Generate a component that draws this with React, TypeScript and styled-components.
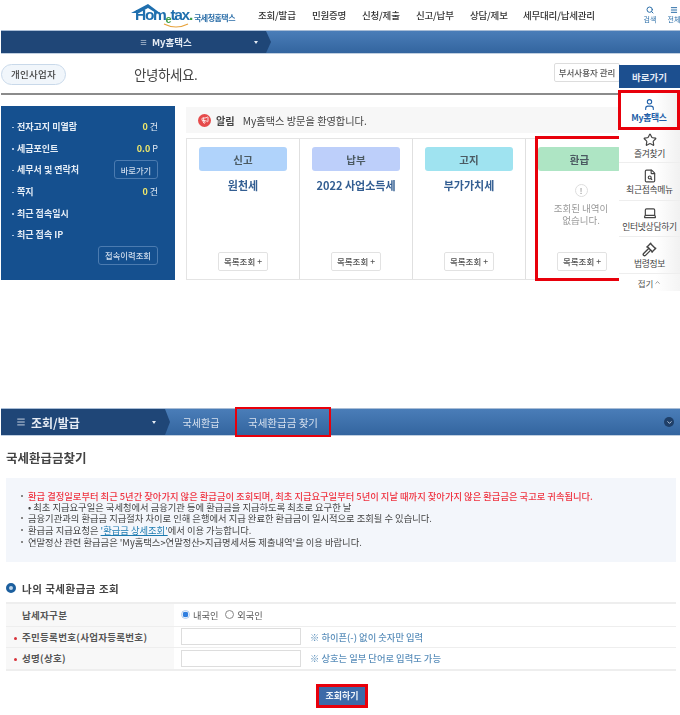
import React from "react";
import styled, { createGlobalStyle } from "styled-components";
import { User, Star, FileSearch, Laptop, Gavel, ChevronUp, ChevronDown, Search, Menu, Megaphone } from "lucide-react";

const Global = createGlobalStyle`
  html, body { margin: 0; padding: 0; background: #fff; }
  body { font-family: "Noto Sans CJK KR", "Noto Sans", sans-serif; color: #333; }
  *, *::before, *::after { box-sizing: border-box; }
`;

const Page = styled.div`
  width: 680px;
  height: 715px;
  overflow: hidden;
  position: relative;
  filter: blur(0.35px);
`;

const Header = styled.header`
  height: 30px;
  display: flex;
  align-items: center;
  padding-left: 131px;
`;

const Logo = styled.div`
  width: 106px;
  height: 28px;
  position: relative;
  flex: none;
  display: flex;
  align-items: flex-end;
`;

const LogoRoof = styled.svg`
  position: absolute;
  left: 0;
  top: 2px;
`;

const LogoSmile = styled.svg`
  position: absolute;
  left: 32px;
  bottom: 0;
`;

const LogoWord = styled.span`
  font-family: "Liberation Sans", sans-serif;
  font-weight: 700;
  font-size: 15.5px;
  line-height: 15px;
  letter-spacing: -1.3px;
  color: #1f6fae;
  margin: 0 0 5px 4px;
  white-space: nowrap;
`;

const LogoE = styled.span`
  color: #3f9f4a;
  font-size: 11px;
  position: relative;
  top: 3px;
`;

const LogoTail = styled.span`
  color: #3f9f4a;
`;

const LogoName = styled.span`
  font-size: 8px;
  font-weight: 700;
  line-height: 12px;
  color: #2b6ea8;
  letter-spacing: -0.5px;
  margin: 0 0 5px 2px;
  white-space: nowrap;
`;

const Nav = styled.nav`
  display: flex;
  align-items: center;
  margin-left: 21px;
  height: 30px;
`;

const NavItem = styled.span<{ $w: number }>`
  width: ${(p) => p.$w}px;
  flex: none;
  font-size: 9.5px;
  font-weight: 500;
  letter-spacing: -0.2px;
  color: #333;
  white-space: nowrap;
`;

const Tools = styled.div`
  display: flex;
  margin-left: 46px;
  gap: 10px;
`;

const Tool = styled.div`
  width: 14px;
  display: flex;
  flex-direction: column;
  align-items: center;
  font-size: 7px;
  line-height: 9px;
  color: #2b6ea8;
  white-space: nowrap;
  gap: 1px;
`;

const Crumb = styled.div<{ $h: number }>`
  height: ${(p) => p.$h}px;
  margin-left: 1px;
  display: flex;
  align-items: stretch;
  background: linear-gradient(#4a7db8, #33659f);
  border-top: 1px solid #a9bdd6;
  border-bottom: 1px solid #c0cfe0;
  position: relative;
`;

const CrumbHead = styled.div<{ $w: number; $pad: number }>`
  width: ${(p) => p.$w}px;
  padding-left: ${(p) => p.$pad}px;
  background: #1f4677;
  display: flex;
  align-items: center;
  color: #e6ecf4;
  position: relative;
  flex: none;
  &::after {
    content: "";
    position: absolute;
    right: -5px;
    top: 0;
    bottom: 0;
    width: 5px;
    background: #1f4677;
    clip-path: polygon(0 0, 100% 50%, 0 100%);
  }
`;

const CrumbTitle = styled.span<{ $size: number }>`
  font-size: ${(p) => p.$size}px;
  font-weight: 700;
  margin-left: 5px;
  white-space: nowrap;
`;

const Caret = styled.span<{ $left: number }>`
  margin-left: ${(p) => p.$left}px;
  width: 0;
  height: 0;
  border-left: 2.5px solid transparent;
  border-right: 2.5px solid transparent;
  border-top: 3px solid #e6ecf4;
`;

const CrumbLink = styled.div<{ $w: number; $mark?: boolean }>`
  width: ${(p) => p.$w}px;
  flex: none;
  display: flex;
  align-items: center;
  justify-content: center;
  font-size: ${(p) => (p.$mark ? 10.5 : 10)}px;
  color: #d5e0ee;
  white-space: nowrap;
  position: relative;
  ${(p) => p.$mark && "outline: 2px solid #e8000b; outline-offset: 0; z-index: 1;"}
`;

const CrumbEnd = styled.div`
  margin-left: auto;
  margin-right: 6px;
  align-self: center;
  width: 10px;
  height: 10px;
  border-radius: 50%;
  background: #1f3f68;
  color: #c9d6e6;
  display: flex;
  align-items: center;
  justify-content: center;
`;

const Top = styled.section`
  position: relative;
  height: 408px;
`;

const Greeting = styled.div`
  height: 41px;
  margin-left: 1px;
  width: 619px;
  display: flex;
  align-items: center;
  border-bottom: 2px solid #8b8b8b;
  padding-top: 1px;
`;

const Pill = styled.span`
  width: 65px;
  height: 21px;
  border: 1px solid #c9d9ea;
  border-radius: 11px;
  background: #f1f6fb;
  display: flex;
  align-items: center;
  justify-content: center;
  font-size: 9.5px;
  letter-spacing: 0.3px;
  font-weight: 500;
  color: #444;
`;

const Hello = styled.h2`
  margin: 0 0 0 68px;
  font-size: 13.5px;
  font-weight: 400;
  color: #444;
  letter-spacing: -0.4px;
`;

const SubUser = styled.span`
  margin-left: auto;
  width: 66px;
  height: 19px;
  margin-top: -3px;
  border: 1px solid #ddd;
  border-radius: 2px;
  font-size: 8.5px;
  font-weight: 500;
  line-height: 17px;
  text-align: center;
  color: #555;
  white-space: nowrap;
`;

const Board = styled.div`
  display: flex;
  margin: 11px 0 0 1px;
  align-items: flex-start;
`;

const SidePanel = styled.aside`
  width: 174px;
  height: 174px;
  background: #15508f;
  padding: 10px 17px 0 11px;
  display: flex;
  flex-direction: column;
`;

const Stat = styled.div`
  height: 21.6px;
  display: flex;
  align-items: center;
  justify-content: space-between;
  font-size: 9px;
  font-weight: 700;
  color: #e5edf6;
  white-space: nowrap;
  padding-left: 5px;
  position: relative;
  &::before {
    content: "";
    position: absolute;
    left: 0;
    top: 50%;
    width: 1.5px;
    height: 1.5px;
    background: #a9c3e0;
  }
`;

const Count = styled.span`
  font-weight: 400;
  & b { color: #f1e96a; font-weight: 700; margin-right: 2px; }
`;

const PanelBtn = styled.span<{ $w: number; $h: number }>`
  width: ${(p) => p.$w}px;
  height: ${(p) => p.$h}px;
  border: 1px solid #4b7bb0;
  border-radius: 3px;
  display: flex;
  align-items: center;
  justify-content: center;
  font-size: 8.3px;
  font-weight: 500;
  color: #cfdcec;
  background: #15508f;
`;

const PanelFoot = styled.div`
  display: flex;
  justify-content: flex-end;
  margin-top: 0;
`;

const Main = styled.div`
  margin-left: 11px;
  width: 434px;
`;

const Notice = styled.div`
  height: 26px;
  margin-top: 1px;
  background: #f7f7f7;
  display: flex;
  align-items: center;
  padding-left: 12px;
  font-size: 10.2px;
  color: #444;
  white-space: nowrap;
`;

const NoticeIcon = styled.span`
  width: 13px;
  height: 13px;
  border-radius: 50%;
  background: #e64b4b;
  color: #fff;
  display: flex;
  align-items: center;
  justify-content: center;
  margin-right: 5px;
`;

const NoticeTag = styled.b`
  font-weight: 700;
  margin-right: 8px;
`;

const Cards = styled.div`
  margin-top: 5px;
  height: 142px;
  display: grid;
  grid-template-columns: 113px 113px 113px 95px;
  border: 1px solid #e4e4e4;
  border-right: none;
`;

const Card = styled.div<{ $mark?: boolean }>`
  padding: 8px 0 0 12px;
  border-right: 1px solid #e0e0e0;
  display: flex;
  flex-direction: column;
  position: relative;
  ${(p) =>
    p.$mark &&
    `border-right: none; &::after { content: ""; position: absolute; left: 9px; top: -3px; width: 88px; height: 145px; border: 3px solid #e8000b; z-index: 2; pointer-events: none; }`}
`;

const Badge = styled.div<{ $bg: string; $w?: number }>`
  width: ${(p) => p.$w ?? 88}px;
  height: 24px;
  border-radius: 3px;
  background: ${(p) => p.$bg};
  display: flex;
  align-items: center;
  justify-content: center;
  font-size: 10.5px;
  font-weight: 700;
  color: #4b5a62;
  flex: none;
`;

const CardTitle = styled.div`
  width: 88px;
  margin-top: 5px;
  font-size: 11px;
  font-weight: 700;
  line-height: 18px;
  color: #335e92;
  text-align: center;
  white-space: nowrap;
`;

const Empty = styled.div`
  width: 86px;
  margin-top: 13px;
  display: flex;
  flex-direction: column;
  align-items: center;
  font-size: 9.5px;
  line-height: 12px;
  color: #999;
  text-align: center;
  white-space: nowrap;
`;

const Bang = styled.span`
  width: 13px;
  height: 13px;
  border-radius: 50%;
  border: 1px solid #ddd;
  font-size: 8px;
  line-height: 11px;
  color: #777;
  margin-bottom: 5px;
`;

const ListBtn = styled.span`
  position: absolute;
  left: 31px;
  bottom: 8px;
  width: 50px;
  height: 19px;
  border: 1px solid #e2e2e2;
  border-radius: 2px;
  font-size: 8.5px;
  font-weight: 500;
  line-height: 17px;
  text-align: center;
  color: #555;
  white-space: nowrap;
`;

const Quick = styled.aside`
  position: absolute;
  right: 0;
  top: 65px;
  width: 61px;
  z-index: 3;
  background: #fff;
`;

const QuickHead = styled.div`
  height: 23px;
  background: #1c4f8f;
  color: #e4ecf6;
  font-size: 9.5px;
  font-weight: 700;
  display: flex;
  align-items: center;
  justify-content: center;
`;

const QuickItem = styled.div<{ $mark?: boolean; $h: number }>`
  height: ${(p) => p.$h}px;
  display: flex;
  flex-direction: column;
  align-items: center;
  justify-content: center;
  gap: 1px;
  font-size: 8.8px;
  line-height: 11px;
  letter-spacing: -0.3px;
  white-space: nowrap;
  background: linear-gradient(90deg, #fff 60%, #f1f1f1);
  border-bottom: 1px solid #eee;
  color: ${(p) => (p.$mark ? "#1f5fa8" : "#444")};
  font-weight: ${(p) => (p.$mark ? 700 : 400)};
  ${(p) => p.$mark && "border: 3px solid #e8000b; margin: 2px 0 0 -1px; width: 62px;"}
`;

const QuickFold = styled.div`
  height: 17px;
  display: flex;
  align-items: center;
  justify-content: center;
  gap: 1px;
  font-size: 8.5px;
  color: #555;
  background: linear-gradient(90deg, #fff 60%, #f4f4f4);
`;

const Lower = styled.section``;

const PageTitle = styled.h1`
  margin: 12px 0 0 6px;
  font-size: 12.5px;
  line-height: 19px;
  font-weight: 700;
  color: #444;
`;

const Info = styled.div`
  margin: 11px 4px 0 6px;
  height: 84px;
  background: #f3f6fb;
  padding: 12px 0 0 14px;
  font-size: 9.3px;
  line-height: 12px;
  color: #444;
  white-space: nowrap;
`;

const InfoLine = styled.div<{ $red?: boolean; $sub?: boolean }>`
  position: relative;
  padding-left: 8px;
  color: ${(p) => (p.$red ? "#ef3340" : "#444")};
  font-weight: ${(p) => (p.$red ? 500 : 400)};
  height: ${(p) => (p.$sub ? 10 : 12)}px;
  line-height: ${(p) => (p.$sub ? 10 : 12)}px;
  &::before {
    content: "";
    position: absolute;
    left: 1px;
    top: 5px;
    width: 1.5px;
    height: 1.5px;
    background: #888;
    display: ${(p) => (p.$sub ? "none" : "block")};
  }
`;

const InfoLink = styled.a`
  color: #1b7ab0;
  text-decoration: underline;
`;

const SectionTitle = styled.h3`
  margin: 18px 0 0 6px;
  height: 16px;
  display: flex;
  align-items: center;
  gap: 6px;
  font-size: 10.5px;
  letter-spacing: 0.5px;
  font-weight: 700;
  color: #444;
`;

const Bullet = styled.span`
  width: 10px;
  height: 10px;
  border-radius: 50%;
  border: 3px solid #1c5f9e;
  background: #bcd4ea;
`;

const FormTable = styled.div`
  margin: 6px 4px 0 6px;
  border-top: 2px solid #eee;
  border-bottom: 2px solid #eee;
`;

const FormRow = styled.div`
  display: grid;
  grid-template-columns: 168px 1fr;
  height: 21.5px;
  & + & { border-top: 1px solid #eee; }
`;

const FormLabel = styled.div<{ $req?: boolean }>`
  background: #f8f8f8;
  padding-left: 16px;
  font-size: 9.5px;
  font-weight: 700;
  letter-spacing: 0.3px;
  color: #555;
  display: flex;
  align-items: center;
  position: relative;
  white-space: nowrap;
  ${(p) =>
    p.$req &&
    `&::before { content: ""; position: absolute; left: 8px; top: 10px; width: 3px; height: 3px; border-radius: 50%; background: #d8333b; }`}
`;

const FormCell = styled.div`
  display: flex;
  align-items: center;
  padding-left: 7px;
  font-size: 9.2px;
  color: #555;
  white-space: nowrap;
`;

const Radio = styled.span<{ $on?: boolean }>`
  width: 9px;
  height: 9px;
  border-radius: 50%;
  border: 1px solid ${(p) => (p.$on ? "#a9c8ee" : "#888")};
  background: ${(p) => (p.$on ? "radial-gradient(circle, #2f7fe0 55%, #fff 62%)" : "#fff")};
  margin-right: 3px;
  flex: none;
`;

const RadioText = styled.span`
  margin-right: 7px;
`;

const TextBox = styled.input`
  width: 120px;
  height: 17px;
  border: 1px solid #ddd;
  background: #fff;
  padding: 0;
  flex: none;
`;

const Hint = styled.span`
  margin-left: 9px;
  color: #5b8fbb;
  font-size: 9.3px;
  font-weight: 500;
`;

const Actions = styled.div`
  display: flex;
  justify-content: center;
  margin: 13px 0 0 4px;
`;

const SubmitButton = styled.button`
  width: 52px;
  height: 24px;
  border: 3px solid #e8000b;
  background: #3d6aa8;
  color: #eef3f9;
  font: 700 9px "Noto Sans CJK KR", sans-serif;
  padding: 0;
`;

const stats = [
  { label: "전자고지 미열람", value: <Count><b>0</b>건</Count> },
  { label: "세금포인트", value: <Count><b>0.0</b>P</Count> },
  { label: "세무서 및 연락처", value: <PanelBtn $w={44} $h={19}>바로가기</PanelBtn> },
  { label: "쪽지", value: <Count><b>0</b>건</Count> },
  { label: "최근 접속일시", value: null },
  { label: "최근 접속 IP", value: null },
];

const cards = [
  { tag: "신고", bg: "#b0d3fb", title: "원천세" },
  { tag: "납부", bg: "#bdcffa", title: "2022 사업소득세" },
  { tag: "고지", bg: "#9fe3f0", title: "부가가치세" },
];

const navItems: [string, number][] = [
  ["조회/발급", 54],
  ["민원증명", 50],
  ["신청/제출", 54],
  ["신고/납부", 54],
  ["상담/제보", 53],
  ["세무대리/납세관리", 74],
];

export default function App() {
  return (
    <Page>
      <Global />
      <Top>
        <Header>
          <Logo>
            <LogoRoof width="30" height="12" viewBox="0 0 30 12">
              <path d="M0 10 L17 1 L29 10 L25 10 L17 5 L8 10 Z" fill="#1f6fae" />
            </LogoRoof>
            <LogoWord>Hom<LogoE>e</LogoE>tax<LogoTail>.</LogoTail></LogoWord>
            <LogoName>국세청홈택스</LogoName>
            <LogoSmile width="26" height="6" viewBox="0 0 26 6">
              <path d="M1 1 Q13 7 25 1" fill="none" stroke="#e8a33d" strokeWidth="1.2" />
            </LogoSmile>
          </Logo>
          <Nav>
            {navItems.map(([t, w]) => (
              <NavItem key={t} $w={w}>{t}</NavItem>
            ))}
          </Nav>
          <Tools>
            <Tool><Search size={8} strokeWidth={3} />검색</Tool>
            <Tool><Menu size={8} strokeWidth={3} />전체</Tool>
          </Tools>
        </Header>
        <Crumb $h={24}>
          <CrumbHead $w={265} $pad={139}>
            <Menu size={7} strokeWidth={2} />
            <CrumbTitle $size={9.5}>My홈택스</CrumbTitle>
            <Caret $left={62} />
          </CrumbHead>
        </Crumb>
        <Greeting>
          <Pill>개인사업자</Pill>
          <Hello>안녕하세요.</Hello>
          <SubUser>부서사용자 관리</SubUser>
        </Greeting>
        <Board>
          <SidePanel>
            {stats.map((s) => (
              <Stat key={s.label}>
                {s.label}
                {s.value}
              </Stat>
            ))}
            <PanelFoot>
              <PanelBtn $w={60} $h={19}>접속이력조회</PanelBtn>
            </PanelFoot>
          </SidePanel>
          <Main>
            <Notice>
              <NoticeIcon><Megaphone size={8} strokeWidth={2.5} /></NoticeIcon>
              <NoticeTag>알림</NoticeTag>
              My홈택스 방문을 환영합니다.
            </Notice>
            <Cards>
              {cards.map((c) => (
                <Card key={c.tag}>
                  <Badge $bg={c.bg}>{c.tag}</Badge>
                  <CardTitle>{c.title}</CardTitle>
                  <ListBtn>목록조회 +</ListBtn>
                </Card>
              ))}
              <Card $mark>
                <Badge $bg="#aee5c4" $w={83}>환급</Badge>
                <Empty>
                  <Bang>!</Bang>
                  조회된 내역이
                  <br />
                  없습니다.
                </Empty>
                <ListBtn>목록조회 +</ListBtn>
              </Card>
            </Cards>
          </Main>
        </Board>
        <Quick>
          <QuickHead>바로가기</QuickHead>
          <QuickItem $mark $h={40}><User size={13} strokeWidth={2} />My홈택스</QuickItem>
          <QuickItem $h={33}><Star size={14} />즐겨찾기</QuickItem>
          <QuickItem $h={38}><FileSearch size={14} strokeWidth={2} />최근접속메뉴</QuickItem>
          <QuickItem $h={36}><Laptop size={14} strokeWidth={2} />인터넷상담하기</QuickItem>
          <QuickItem $h={37}><Gavel size={15} strokeWidth={2.2} />법령정보</QuickItem>
          <QuickFold>접기<ChevronUp size={7} /></QuickFold>
        </Quick>
      </Top>
      <Lower>
        <Crumb $h={28}>
          <CrumbHead $w={164} $pad={15}>
            <Menu size={10} strokeWidth={2} />
            <CrumbTitle $size={12}>조회/발급</CrumbTitle>
            <Caret $left={72} />
          </CrumbHead>
          <CrumbLink $w={72}>국세환급</CrumbLink>
          <CrumbLink $w={92} $mark>국세환급금 찾기</CrumbLink>
          <CrumbEnd><ChevronDown size={7} strokeWidth={3} /></CrumbEnd>
        </Crumb>
        <PageTitle>국세환급금찾기</PageTitle>
        <Info>
          <InfoLine $red>환급 결정일로부터 최근 5년간 찾아가지 않은 환급금이 조회되며, 최초 지급요구일부터 5년이 지날 때까지 찾아가지 않은 환급금은 국고로 귀속됩니다.</InfoLine>
          <InfoLine $sub>• 최초 지급요구일은 국세청에서 금융기관 등에 환급금을 지급하도록 최초로 요구한 날</InfoLine>
          <InfoLine>금융기관과의 환급금 지급절차 차이로 인해 은행에서 지급 완료한 환급금이 일시적으로 조회될 수 있습니다.</InfoLine>
          <InfoLine>환급금 지급요청은 <InfoLink>'환급금 상세조회'</InfoLink>에서 이용 가능합니다.</InfoLine>
          <InfoLine>연말정산 관련 환급금은 'My홈택스&gt;연말정산&gt;지급명세서등 제출내역'을 이용 바랍니다.</InfoLine>
        </Info>
        <SectionTitle><Bullet />나의 국세환급금 조회</SectionTitle>
        <FormTable>
          <FormRow>
            <FormLabel>납세자구분</FormLabel>
            <FormCell>
              <Radio $on /><RadioText>내국인</RadioText>
              <Radio /><RadioText>외국인</RadioText>
            </FormCell>
          </FormRow>
          <FormRow>
            <FormLabel $req>주민등록번호(사업자등록번호)</FormLabel>
            <FormCell>
              <TextBox readOnly />
              <Hint>※ 하이픈(-) 없이 숫자만 입력</Hint>
            </FormCell>
          </FormRow>
          <FormRow>
            <FormLabel $req>성명(상호)</FormLabel>
            <FormCell>
              <TextBox readOnly />
              <Hint>※ 상호는 일부 단어로 입력도 가능</Hint>
            </FormCell>
          </FormRow>
        </FormTable>
        <Actions>
          <SubmitButton>조회하기</SubmitButton>
        </Actions>
      </Lower>
    </Page>
  );
}
